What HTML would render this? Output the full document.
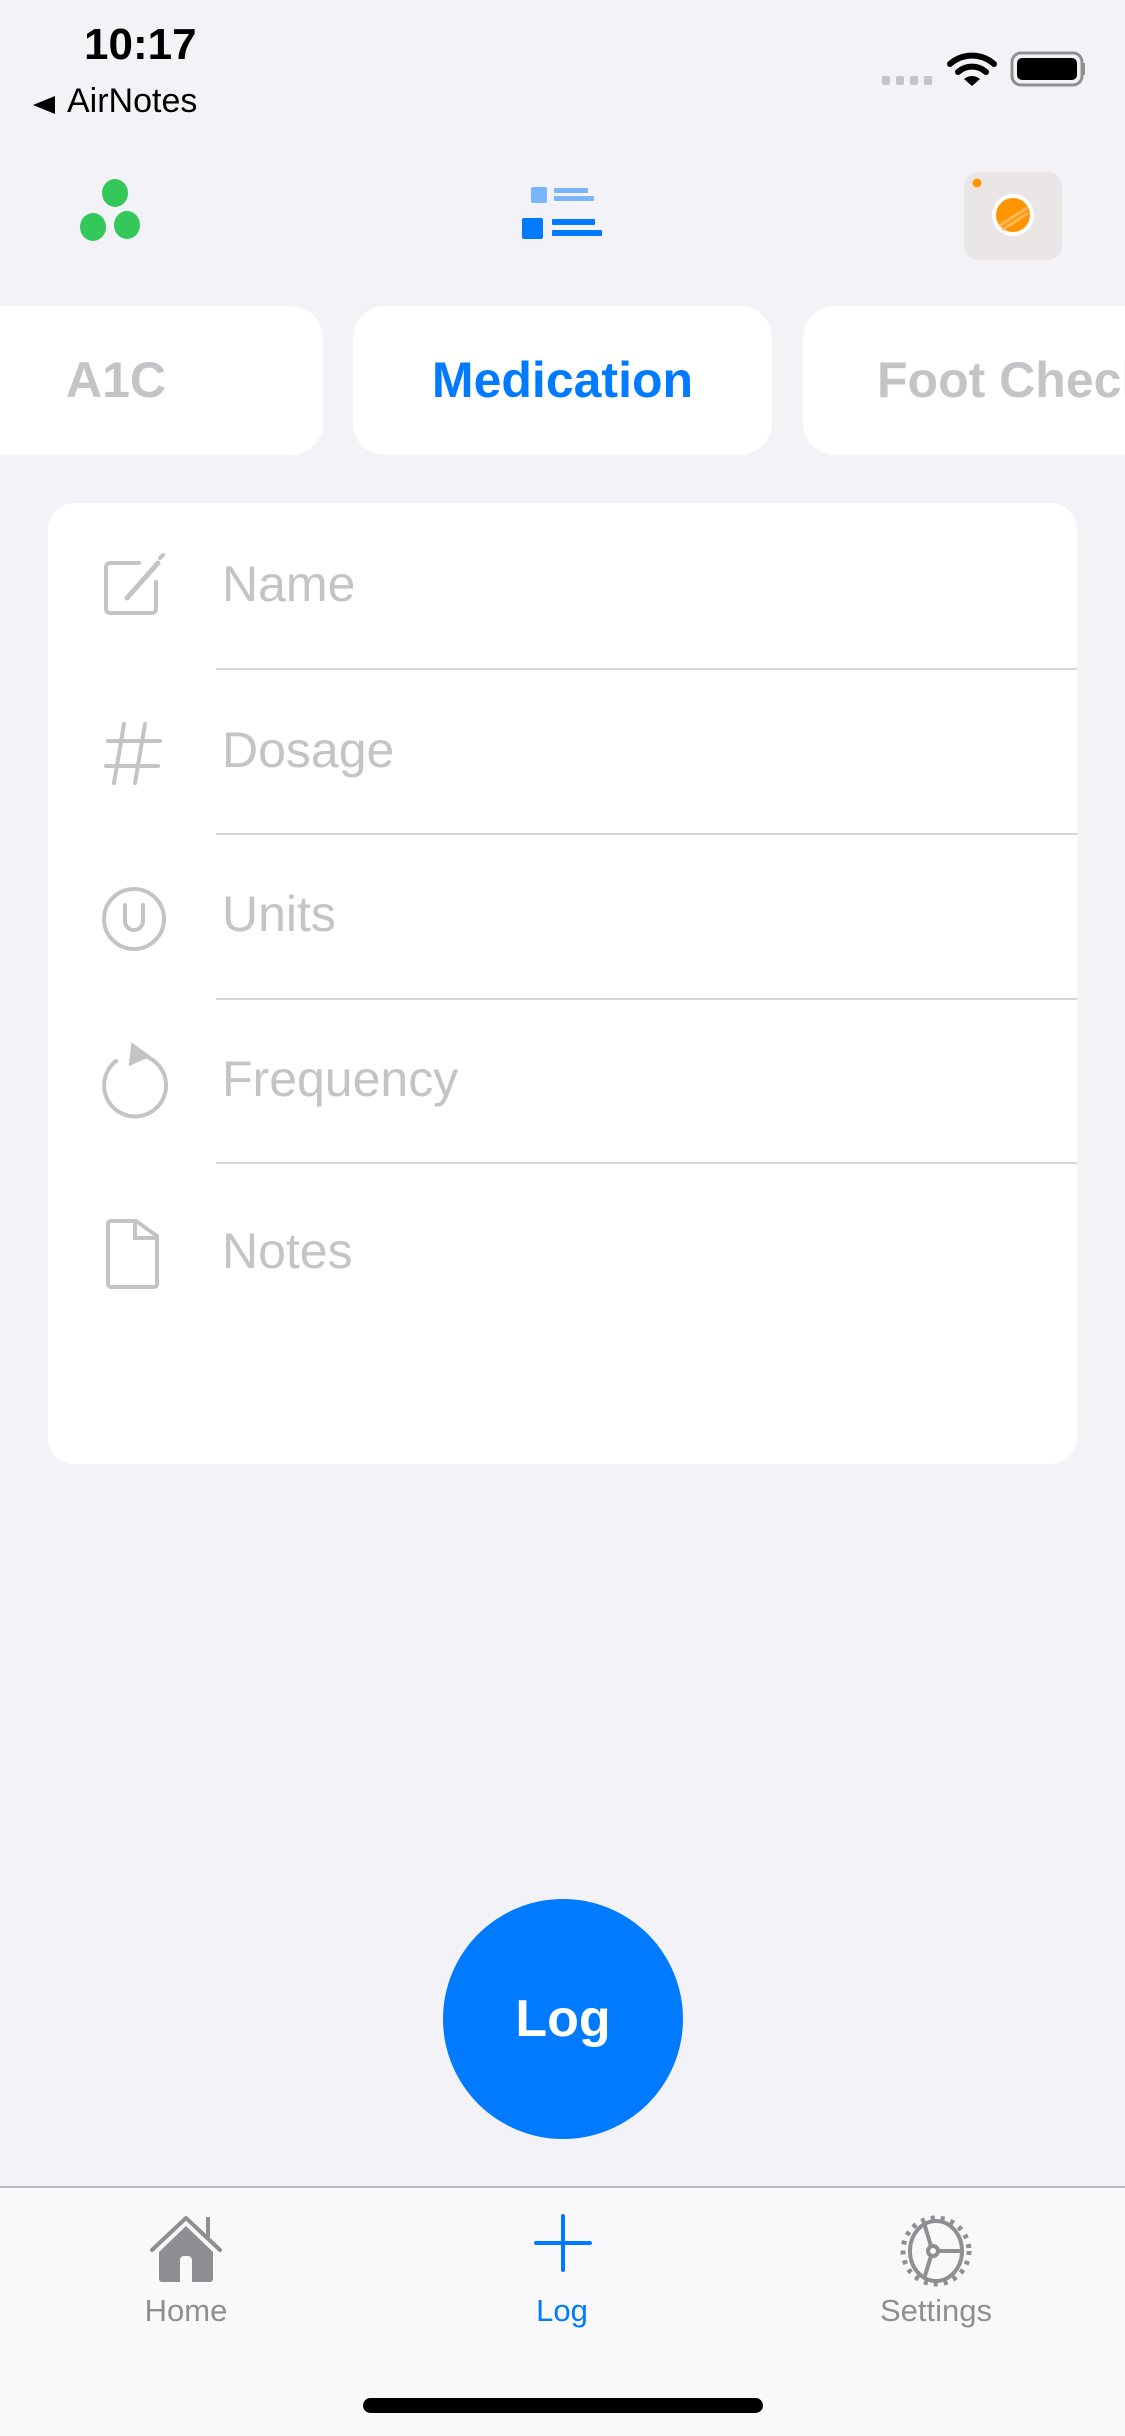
<!DOCTYPE html>
<html><head><meta charset="utf-8"><style>
*{margin:0;padding:0;box-sizing:border-box}
body{width:1125px;height:2436px;background:#f2f2f7;position:relative;overflow:hidden;font-family:"Liberation Sans",Arial,sans-serif}
.abs{position:absolute}
.tab{position:absolute;top:306px;height:149px;background:#fff;border-radius:32px;font-weight:bold;font-size:50px;line-height:149px;white-space:nowrap;overflow:hidden}
.row{position:absolute;left:222px;font-size:50px;color:#c4c4c6;line-height:60px}
.sep{position:absolute;left:216px;right:48px;height:2px;background:#d6d6d8}
.lbl{position:absolute;top:2293px;font-size:31px;color:#8e8e93;width:200px;text-align:center}
</style></head><body>
<div class="abs" style="left:84px;top:20px;font-size:44px;font-weight:bold;color:#000">10:17</div>
<svg class="abs" style="left:30px;top:95px" width="30" height="20"><polygon points="3,10 25,1 25,19" fill="#000"/></svg>
<div class="abs" style="left:67px;top:82px;font-size:34px;color:#000">AirNotes</div>
<svg class="abs" style="left:880px;top:50px" width="205" height="40">
<rect x="2" y="26" width="8" height="9" rx="2" fill="#c4c4c6"/><rect x="16" y="26" width="8" height="9" rx="2" fill="#c4c4c6"/><rect x="30" y="26" width="8" height="9" rx="2" fill="#c4c4c6"/><rect x="44" y="26" width="8" height="9" rx="2" fill="#c4c4c6"/>
<path d="M70 14 A33 33 0 0 1 114 14" stroke="#000" stroke-width="6" fill="none" stroke-linecap="round"/>
<path d="M78 22 A21 21 0 0 1 106 22" stroke="#000" stroke-width="6" fill="none" stroke-linecap="round"/>
<path d="M84 29 L92 36 L100 29 A12 12 0 0 0 84 29Z" fill="#000"/>
<rect x="132" y="3" width="70" height="32" rx="9" fill="none" stroke="#8e8e93" stroke-width="3"/>
<rect x="137" y="8" width="60" height="22" rx="5" fill="#000"/>
<rect x="203" y="13" width="3" height="12" rx="1" fill="#8e8e93"/>
</svg>
<svg class="abs" style="left:70px;top:170px" width="80" height="80">
<ellipse cx="45" cy="23" rx="13" ry="14" fill="#34c759"/><ellipse cx="23" cy="57" rx="13" ry="14" fill="#34c759"/><ellipse cx="57" cy="55" rx="13" ry="14" fill="#34c759"/>
</svg>
<svg class="abs" style="left:520px;top:184px" width="90" height="60">
<rect x="11" y="3" width="16" height="16" rx="2" fill="#7ab4fb"/>
<rect x="34" y="4" width="34" height="5" rx="1" fill="#7ab4fb"/><rect x="34" y="12" width="40" height="5" rx="1" fill="#7ab4fb"/>
<rect x="2" y="34" width="21" height="21" rx="2" fill="#007aff"/>
<rect x="32" y="35" width="43" height="6" rx="1" fill="#007aff"/><rect x="32" y="46" width="50" height="6" rx="1" fill="#007aff"/>
</svg>
<svg class="abs" style="left:964px;top:172px" width="98" height="88">
<rect x="0" y="0" width="98" height="88" rx="14" fill="#e9e6e5"/>
<circle cx="13" cy="11" r="4.5" fill="#ff9500"/>
<circle cx="49" cy="43" r="21" fill="#fff"/>
<circle cx="49" cy="43" r="17" fill="#ff9500"/>
<path d="M35 54 L63 36 M38 58 L64 41" stroke="#ffc170" stroke-width="3" opacity=".8"/>
</svg>
<div class="tab" style="left:-40px;width:363px;color:#c4c4c6"><span style="position:absolute;left:106px">A1C</span></div>
<div class="tab" style="left:353px;width:419px;color:#007aff;text-align:center">Medication</div>
<div class="tab" style="left:803px;width:400px;color:#c4c4c6"><span style="position:absolute;left:74px">Foot Check</span></div>
<div class="abs" style="left:48px;top:503px;width:1029px;height:961px;background:#fff;border-radius:26px"></div>
<svg class="abs" style="left:0;top:0" width="300" height="1400" fill="none" stroke="#c4c4c6" stroke-width="4" stroke-linecap="round">
<path d="M139 563 H110 a4 4 0 0 0 -4 4 V609 a4 4 0 0 0 4 4 H152 a4 4 0 0 0 4 -4 V582"/>
<path d="M127 598 L158 563" stroke-width="5"/><path d="M160 558 L163 555"/>
<path d="M124 724 L114 783 M145 724 L135 783 M108 741 H160 M106 766 H158"/>
<circle cx="134" cy="919" r="30"/>
<path d="M125 905 V921 a9 9 0 0 0 18 0 V905"/>
<path d="M116 1061 A31 31 0 1 0 141 1055"/><path d="M133 1046 L147 1056 L131 1063Z" fill="#c4c4c6"/>
<path d="M111 1221 H136 L157 1236 V1284 a3 3 0 0 1 -3 3 H111 a3 3 0 0 1 -3 -3 V1224 a3 3 0 0 1 3 -3Z"/><path d="M135 1221 V1238 H157"/>
</svg>
<div class="row" style="top:554px">Name</div>
<div class="sep" style="top:668px"></div>
<div class="row" style="top:720px">Dosage</div>
<div class="sep" style="top:833px"></div>
<div class="row" style="top:884px">Units</div>
<div class="sep" style="top:998px"></div>
<div class="row" style="top:1049px">Frequency</div>
<div class="sep" style="top:1162px"></div>
<div class="row" style="top:1221px">Notes</div>
<div class="abs" style="left:443px;top:1899px;width:240px;height:240px;border-radius:50%;background:#007aff;color:#fff;font-weight:bold;font-size:52px;line-height:240px;text-align:center">Log</div>
<div class="abs" style="left:0;top:2186px;width:1125px;height:250px;background:#f9f9fb;border-top:2px solid #b8b8bb"></div>
<svg class="abs" style="left:148px;top:2214px" width="80" height="72">
<path d="M4 36 L38 4 M38 4 L72 36" stroke="#8e8e93" stroke-width="4" fill="none" stroke-linecap="round"/>
<path d="M60 3 V23" stroke="#8e8e93" stroke-width="4"/>
<path d="M11 38 L38 12 L65 38 V65 a3 3 0 0 1 -3 3 H44 V46 a4 4 0 0 0 -4 -4 H36 a4 4 0 0 0 -4 4 V68 H14 a3 3 0 0 1 -3 -3Z" fill="#8e8e93"/>
</svg>
<svg class="abs" style="left:533px;top:2214px" width="60" height="60"><path d="M30 2 V56 M3 29 H57" stroke="#007aff" stroke-width="4" stroke-linecap="round"/></svg>
<svg class="abs" style="left:898px;top:2213px" width="76" height="76" fill="none" stroke="#8e8e93" stroke-width="4">
<ellipse cx="38" cy="38" rx="26" ry="30"/>
<circle cx="38" cy="38" r="33" stroke-width="5" stroke-dasharray="4 6"/>
<circle cx="35" cy="38" r="5"/>
<path d="M40 38 H64 M33 33 L26 10 M33 43 L26 66"/>
</svg>
<div class="lbl" style="left:86px">Home</div>
<div class="lbl" style="left:462px;color:#007aff">Log</div>
<div class="lbl" style="left:836px">Settings</div>
<div class="abs" style="left:363px;top:2398px;width:400px;height:15px;border-radius:8px;background:#000"></div>
</body></html>
